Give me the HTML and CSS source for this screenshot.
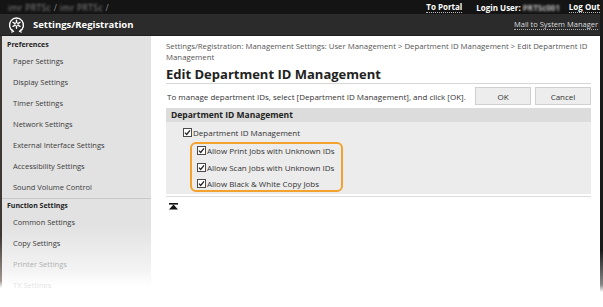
FILE: index.html
```html
<!DOCTYPE html>
<html>
<head>
<meta charset="utf-8">
<link rel="stylesheet" href="styles.css">
</head>
<body>
<div class="window">
  <div class="frame">
    <header class="topbar">
      <div class="host"><span class="blur">imr PRTSc</span> / <span class="blur">imr PRTSc</span> /</div>
      <nav class="toplinks">
        <a class="link">To Portal</a>
        <span class="login">Login User: <span class="blur user">PRTSc001</span></span>
        <a class="link logout">Log Out</a>
      </nav>
    </header>
    <div class="titlebar">
      <div class="brand">
        <svg class="logo" width="17" height="17" viewBox="0 0 17 17">
          <path d="M5.2 15.2 A7 7 0 1 1 11.8 15.2" fill="none" stroke="#fff" stroke-width="1.4"/>
          <path d="M3.6 13.4 L5.4 15.4 L3.2 16.2 M13.4 13.4 L11.6 15.4 L13.8 16.2" fill="none" stroke="#fff" stroke-width="1.2"/>
          <g stroke="#fff" stroke-width="1.4" stroke-linecap="round">
            <line x1="8.5" y1="4.3" x2="8.5" y2="12.3"/>
            <line x1="5" y1="6.3" x2="12" y2="10.3"/>
            <line x1="5" y1="10.3" x2="12" y2="6.3"/>
          </g>
          <circle cx="8.5" cy="8.3" r="1.6" fill="#2b2b2b" stroke="#fff" stroke-width="1"/>
        </svg>
        <span class="brand-name">Settings/Registration</span>
      </div>
      <a class="mail">Mail to System Manager</a>
    </div>
    <div class="body">
      <div class="edge-left"></div>
      <aside class="sidebar">
        <div class="group-title">Preferences</div>
        <div class="item">Paper Settings</div>
        <div class="item">Display Settings</div>
        <div class="item">Timer Settings</div>
        <div class="item">Network Settings</div>
        <div class="item">External Interface Settings</div>
        <div class="item">Accessibility Settings</div>
        <div class="item">Sound Volume Control</div>
        <div class="group-title sep">Function Settings</div>
        <div class="item">Common Settings</div>
        <div class="item">Copy Settings</div>
        <div class="item faded">Printer Settings</div>
        <div class="item faded2">TX Settings</div>
      </aside>
      <main class="main">
        <p class="crumbs">Settings/Registration: Management Settings: User Management &gt; Department ID Management &gt; Edit Department ID Management</p>
        <h1 class="title">Edit Department ID Management</h1>
        <div class="intro">
          <p class="desc">To manage department IDs, select [Department ID Management], and click [OK].</p>
          <div class="buttons">
            <button class="btn">OK</button>
            <button class="btn">Cancel</button>
          </div>
        </div>
        <section class="panel">
          <div class="panel-head">Department ID Management</div>
          <div class="panel-body">
            <label class="check"><svg class="cb" width="9" height="9" viewBox="0 0 9 9"><rect x="0.5" y="0.5" width="8" height="8" fill="#fff" stroke="#4a4a4a"/><path d="M2 4.6 L3.7 6.4 L7 2.4" fill="none" stroke="#222" stroke-width="1.3"/></svg>Department ID Management</label>
            <div class="highlight">
              <label class="check"><svg class="cb" width="9" height="9" viewBox="0 0 9 9"><rect x="0.5" y="0.5" width="8" height="8" fill="#fff" stroke="#4a4a4a"/><path d="M2 4.6 L3.7 6.4 L7 2.4" fill="none" stroke="#222" stroke-width="1.3"/></svg>Allow Print Jobs with Unknown IDs</label>
              <label class="check"><svg class="cb" width="9" height="9" viewBox="0 0 9 9"><rect x="0.5" y="0.5" width="8" height="8" fill="#fff" stroke="#4a4a4a"/><path d="M2 4.6 L3.7 6.4 L7 2.4" fill="none" stroke="#222" stroke-width="1.3"/></svg>Allow Scan Jobs with Unknown IDs</label>
              <label class="check"><svg class="cb" width="9" height="9" viewBox="0 0 9 9"><rect x="0.5" y="0.5" width="8" height="8" fill="#fff" stroke="#4a4a4a"/><path d="M2 4.6 L3.7 6.4 L7 2.4" fill="none" stroke="#222" stroke-width="1.3"/></svg>Allow Black &amp; White Copy Jobs</label>
            </div>
          </div>
        </section>
        <div class="totop">
          <svg width="9" height="7" viewBox="0 0 9 7"><rect x="0" y="0" width="9" height="1.6" fill="#111"/><path d="M4.5 1.6 L9 6.5 L0 6.5 Z" fill="#111"/></svg>
        </div>
      </main>
    </div>
  </div>
  <div class="edge-right"></div>
</div>
</body>
</html>
```

FILE: styles.css
```css
html, body {
  margin: 0;
  padding: 0;
  background: #fff;
}
body {
  width: 603px;
  height: 307px;
  overflow: hidden;
  font-family: "Open Sans", "Noto Sans", sans-serif;
  color: #333;
}
.window {
  display: flex;
  height: 307px;
}
.frame {
  flex: 1;
  display: flex;
  flex-direction: column;
  min-width: 0;
}
.edge-right {
  width: 3px;
  background: linear-gradient(#1a1a1a 0, #1a1a1a 250px, #888 285px, #fff 292px);
}
.topbar {
  height: 14px;
  background: #141414;
  display: flex;
  align-items: center;
  justify-content: space-between;
  padding: 0 0 0 8px;
  font-size: 8px;
  color: #aaa;
}
.host {
  color: #8a8a8a;
  font-size: 8.5px;
  letter-spacing: 0.4px;
}
.blur {
  filter: blur(1.2px);
}
.toplinks {
  display: flex;
  align-items: center;
  gap: 14px;
  font-weight: bold;
  color: #fff;
}
.link {
  border-bottom: 1px dotted #bbb;
  line-height: 10px;
}
.logout {
  margin-left: -12px;
}
.login .user {
  color: #bbb;
  display: inline-block;
  width: 44px;
}
.titlebar {
  height: 21px;
  background: #2b2b2b;
  display: flex;
  align-items: center;
  justify-content: space-between;
  padding: 0 2px 0 8px;
  border-bottom: 1px solid #1e1e1e;
}
.brand {
  display: flex;
  align-items: center;
  gap: 8px;
}
.logo {
  display: block;
}
.brand-name {
  color: #fff;
  font-weight: bold;
  font-size: 9.5px;
}
.mail {
  color: #ddd;
  font-size: 7.5px;
  border-bottom: 1px dotted #aaa;
  line-height: 10px;
}
.body {
  flex: 1;
  display: flex;
  min-height: 0;
}
.edge-left {
  width: 2px;
  background: linear-gradient(#3e3833 0, #3e3833 200px, #a09890 245px, #fff 252px);
}
.sidebar {
  width: 149px;
  padding-top: 2px;
  background: linear-gradient(#e2e2e2 0, #e2e2e2 190px, #f4f4f4 235px, #fff 250px);
  font-size: 7.5px;
  color: #3a3a3a;
  overflow: hidden;
  height: 250px;
}
.group-title {
  height: 13px;
  line-height: 13px;
  padding-left: 5px;
  font-weight: bold;
  color: #222;
  font-size: 7px;
}
.group-title.sep {
  border-top: 1px solid #c8c8c8;
}
.item {
  height: 21px;
  line-height: 21px;
  padding-left: 11px;
}
.item.faded {
  color: #b0b0b0;
}
.item.faded2 {
  color: #e4e4e4;
}
.main {
  flex: 1;
  padding: 5px 9px 0 15px;
  font-size: 8px;
}
.crumbs {
  margin: 0;
  line-height: 11px;
  color: #555;
  font-size: 7.8px;
}
.title {
  margin: 3px 0 0;
  font-size: 13px;
  line-height: 17px;
  font-weight: bold;
  color: #222;
  padding-bottom: 0;
  border-bottom: 1px solid #d6d6d6;
}
.intro {
  display: flex;
  align-items: center;
  justify-content: space-between;
  padding: 3px 0 3px 1px;
}
.desc {
  margin: 0;
  color: #333;
}
.buttons {
  display: flex;
  gap: 4px;
}
.btn {
  font-family: inherit;
  font-size: 8px;
  color: #333;
  background: #ededed;
  border: 1px solid #d0d0d0;
  height: 18px;
  padding: 0;
  width: 56px;
}
.panel {
  background: #ececec;
  padding-bottom: 2px;
}
.panel-head {
  background: #dcdcdc;
  height: 14px;
  line-height: 14px;
  padding-left: 5px;
  font-weight: bold;
  color: #222;
  font-size: 8.5px;
}
.panel-body {
  padding: 2px 0 0 17px;
  display: flex;
  flex-direction: column;
}
.check {
  display: flex;
  align-items: center;
  height: 16px;
  gap: 1px;
  color: #333;
}
.highlight .check {
  height: 13px;
}
.cb {
  display: block;
}
.highlight {
  align-self: flex-start;
  display: flex;
  margin: 2px 0 0 7px;
  border: 2px solid #f2a22d;
  border-radius: 6px;
  padding: 0 6px 0 5px;
  flex-direction: column;
  gap: 3.5px;
}
.totop {
  margin-top: 2px;
  border-top: 1px solid #dcdcdc;
  padding: 6px 0 0 3px;
}
.totop svg {
  display: block;
}
```
